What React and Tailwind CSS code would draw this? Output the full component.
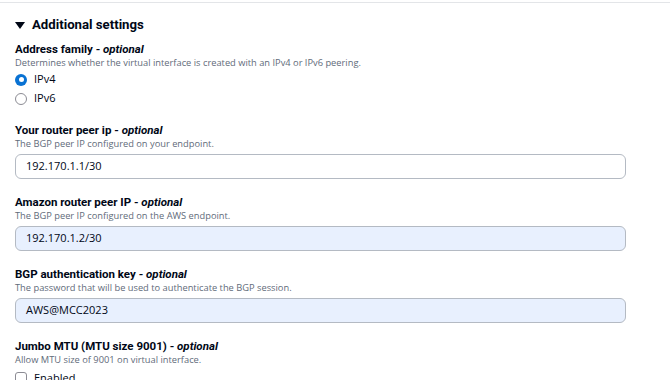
import React from "react";

const boldFont = { fontFamily: 'Roboto, "Open Sans", sans-serif' };

function Label({ title }) {
  return (
    <div
      className="h-[14px] leading-[14px] text-[11.5px] font-bold text-[#000716] whitespace-nowrap"
      style={boldFont}
    >
      {title} - <i className="font-bold">optional</i>
    </div>
  );
}

function Desc({ children }) {
  return (
    <div className="h-[14px] leading-[14px] text-[9.3px] text-[#5f6b7a] whitespace-nowrap">
      {children}
    </div>
  );
}

function Input({ value, filled }) {
  return (
    <div
      className={
        "mt-[3px] h-[25px] w-[611px] rounded-[6px] border border-[#b4bac3] pl-[10px] flex items-center text-[11px] text-[#000716] " +
        (filled ? "bg-[#e8f0fe]" : "bg-white")
      }
    >
      {value}
    </div>
  );
}

export default function App() {
  return (
    <div
      className="w-[670px] h-[380px] overflow-hidden bg-white"
      style={{ fontFamily: '"Open Sans", "Noto Sans", sans-serif' }}
    >
      <div className="mt-[2px] border-t border-[#e3e5e8]" />
      <div className="pl-[15px] pt-[13px]">
        <div className="h-[18px] flex items-center gap-[7px]">
          <svg width="10" height="8" viewBox="0 0 10 8" className="mt-[1px]">
            <polygon points="0,0 10,0 5,7" fill="#000716" />
          </svg>
          <span
            className="text-[13.2px] leading-[18px] font-bold text-[#000716]"
            style={boldFont}
          >
            Additional settings
          </span>
        </div>

        <div className="mt-[8px]">
          <Label title="Address family" />
          <Desc>Determines whether the virtual interface is created with an IPv4 or IPv6 peering.</Desc>
          <div className="h-[19px] flex items-center gap-[7px]">
            <span className="w-[12px] h-[12px] rounded-full bg-[#0972d3] flex items-center justify-center">
              <span className="w-[5px] h-[5px] rounded-full bg-white" />
            </span>
            <span className="text-[11px] text-[#000716]">IPv4</span>
          </div>
          <div className="h-[19px] flex items-center gap-[7px]">
            <span className="w-[12px] h-[12px] rounded-full border border-[#8c8c94] bg-white" />
            <span className="text-[11px] text-[#000716]">IPv6</span>
          </div>
        </div>

        <div className="mt-[15px] flex flex-col gap-[16px]">
          <div>
            <Label title="Your router peer ip" />
            <Desc>The BGP peer IP configured on your endpoint.</Desc>
            <Input value="192.170.1.1/30" />
          </div>
          <div>
            <Label title="Amazon router peer IP" />
            <Desc>The BGP peer IP configured on the AWS endpoint.</Desc>
            <Input value="192.170.1.2/30" filled />
          </div>
          <div>
            <Label title="BGP authentication key" />
            <Desc>The password that will be used to authenticate the BGP session.</Desc>
            <Input value="AWS@MCC2023" filled />
          </div>
          <div>
            <Label title="Jumbo MTU (MTU size 9001)" />
            <Desc>Allow MTU size of 9001 on virtual interface.</Desc>
            <div className="mt-[3px] h-[16px] flex items-center gap-[7px]">
              <span className="w-[12px] h-[12px] rounded-[3px] border border-[#8c8c94] bg-white" />
              <span className="text-[11px] text-[#000716]">Enabled</span>
            </div>
          </div>
        </div>
      </div>
    </div>
  );
}
